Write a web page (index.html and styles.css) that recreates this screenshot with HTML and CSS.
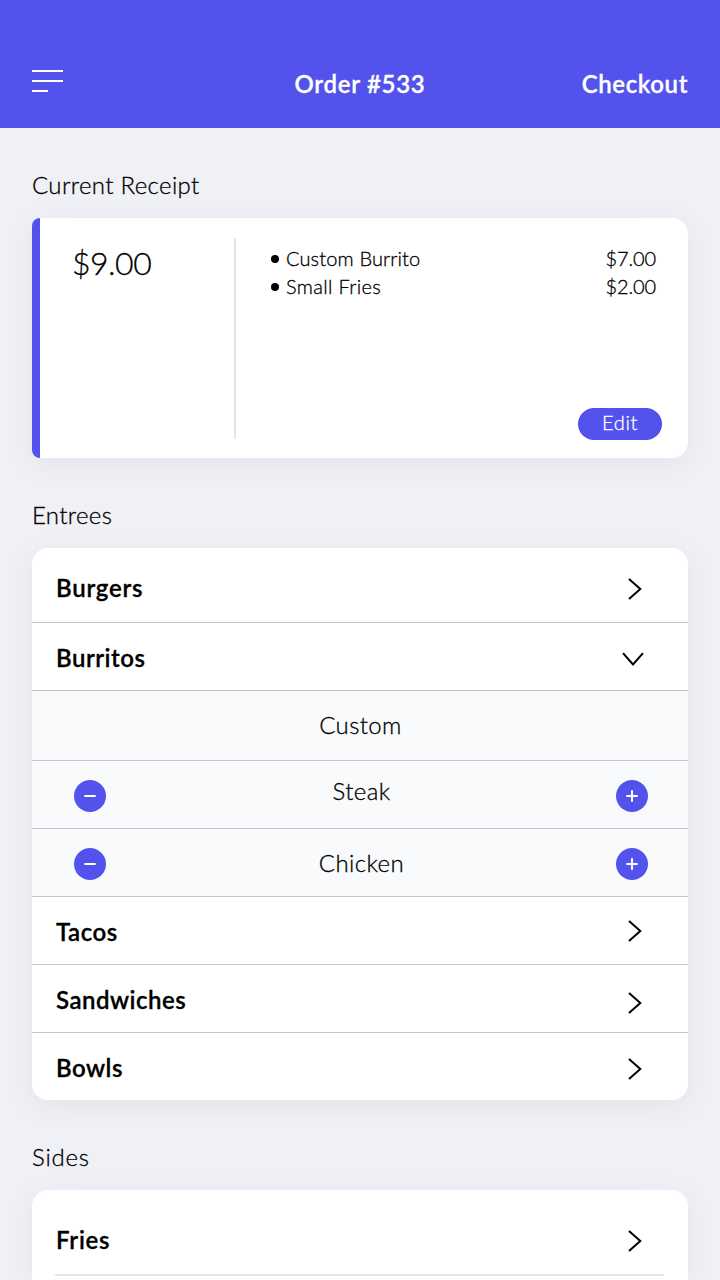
FILE: index.html
```html
<!DOCTYPE html>
<html lang="en">
<head>
<meta charset="utf-8">
<title>Order #533</title>
<link rel="stylesheet" href="styles.css">
</head>
<body>
<svg class="sprite" aria-hidden="true">
  <symbol id="right" viewBox="0 0 24 24"><path d="M6 2l11.300 10L6 22"/></symbol>
  <symbol id="down" viewBox="0 0 24 24"><path d="M2 6.200l10 11.300L22 6.200"/></symbol>
  <symbol id="minus" viewBox="0 0 32 32"><path d="M10.300 16h11.400"/></symbol>
  <symbol id="plus" viewBox="0 0 32 32"><path d="M10.300 16h11.400M16 10.300v11.400"/></symbol>
</svg>
<header class="topbar">
  <svg class="menu" viewBox="0 0 32 24"><path d="M0 3h31M0 13h31M0 23h16"/></svg>
  <h1 class="title">Order #533</h1>
  <a class="checkout">Checkout</a>
</header>
<main class="content">
  <h2 class="heading">Current Receipt</h2>
  <section class="card receipt">
    <div class="total">$9.00</div>
    <div class="details">
      <ul class="items">
        <li class="item"><span class="dot"></span><span class="name">Custom Burrito</span><span class="price">$7.00</span></li>
        <li class="item"><span class="dot"></span><span class="name wide">Small Fries</span><span class="price">$2.00</span></li>
      </ul>
      <button class="edit">Edit</button>
    </div>
  </section>

  <h2 class="heading">Entrees</h2>
  <section class="card menu-list">
    <div class="row first"><span class="label wider">Burgers</span><svg class="chevron"><use href="#right"/></svg></div>
    <div class="row"><span class="label">Burritos</span><svg class="chevron open"><use href="#down"/></svg></div>
    <div class="row option custom"><span class="choice">Custom</span></div>
    <div class="row option steak">
      <svg class="round"><use href="#minus"/></svg><span class="choice">Steak</span><svg class="round"><use href="#plus"/></svg>
    </div>
    <div class="row option chicken">
      <svg class="round"><use href="#minus"/></svg><span class="choice">Chicken</span><svg class="round"><use href="#plus"/></svg>
    </div>
    <div class="row tacos"><span class="label">Tacos</span><svg class="chevron"><use href="#right"/></svg></div>
    <div class="row sandwiches"><span class="label">Sandwiches</span><svg class="chevron"><use href="#right"/></svg></div>
    <div class="row last"><span class="label">Bowls</span><svg class="chevron"><use href="#right"/></svg></div>
  </section>

  <h2 class="heading wider">Sides</h2>
  <section class="card sides">
    <div class="row fries"><span class="label wider">Fries</span><svg class="chevron"><use href="#right"/></svg></div>
    <hr class="divider">
  </section>
</main>
</body>
</html>
```
FILE: styles.css
```css
* { box-sizing: border-box; }
body {
  margin: 0;
  background: #f0f1f6;
  color: #000;
  font-family: Lato, "Open Sans", sans-serif;
  font-size: 24px;
  font-weight: 300;
  line-height: 32px;
  -webkit-text-stroke: 0.3px currentColor;
}
.sprite { display: block; width: 0; height: 0; }
.topbar {
  display: grid;
  grid-template-columns: 1fr auto 1fr;
  height: 128px;
  padding: 67px 32px 0;
  background: #5352ed;
  color: #fff;
}
.menu { width: 32px; height: 24px; margin-top: 1px; fill: none; stroke: #fff; stroke-width: 2; }
.title, .checkout { margin: 0; padding-top: 1px; font-size: 24px; font-weight: 600; letter-spacing: 0.7px; }
.checkout { justify-self: end; letter-spacing: 0.6px; }
.content { padding: 41px 32px 0; }
.heading { margin: 0; height: 49px; font-size: 24px; font-weight: 300; letter-spacing: 0.35px; }
.card {
  margin-bottom: 41px;
  border-radius: 16px;
  background: #fff;
  box-shadow: 0 6px 30px rgba(0, 0, 0, 0.06);
}
.receipt {
  display: flex;
  height: 240px;
  padding: 20px 26px 18px 32px;
  border-left: 8px solid #5352ed;
  border-radius: 8px 16px 16px 8px;
}
.total { width: 162px; padding-top: 5px; font-size: 32px; line-height: 40px; letter-spacing: -0.5px; }
.details {
  flex: 1;
  display: flex;
  flex-direction: column;
  justify-content: space-between;
  border-left: 2px solid #e5e5e5;
  margin-bottom: 1px;
}
.items { margin: 0; padding: 6px 6px 0 35px; list-style: none; font-size: 20px; line-height: 28px; letter-spacing: 0.15px; }
.item { display: flex; align-items: flex-start; }
.dot { width: 8px; height: 8px; margin: 11px 7px 0 0; border-radius: 50%; background: #000; }
.name { flex: 1; }
.wide { letter-spacing: 0.35px; }
.price { letter-spacing: -0.1px; }
.edit {
  align-self: flex-end;
  width: 84px;
  height: 32px;
  margin-bottom: -1px;
  padding: 0 0 3px;
  border: 0;
  border-radius: 16px;
  background: #5352ed;
  color: #fff;
  font: 300 20px/29px Lato, sans-serif;
  letter-spacing: 0.7px;
}
.row {
  display: flex;
  justify-content: space-between;
  height: 68px;
  padding: 18px 41px 0 24px;
  border-bottom: 1px solid #c4c5c9;
}
.first { height: 75px; padding-top: 23px; }
.last { height: 67px; border-bottom: 0; }
.label { padding-top: 1px; font-weight: 600; letter-spacing: 0.5px; }
.wider { letter-spacing: 0.75px; }
.chevron { width: 24px; height: 24px; margin-top: 6px; fill: none; stroke: #000; stroke-width: 2; }
.open { margin-right: 2px; }
.tacos .chevron { margin-top: 4px; }
.sandwiches .chevron { margin-top: 8px; }
.option { padding: 18px 40px 0 42px; background: #f9fafc; letter-spacing: 0.4px; }
.custom { height: 70px; justify-content: center; }
.steak { padding-top: 14px; }
.choice { margin-left: 1px; }
.custom .choice { margin-left: -1px; }
.round { width: 32px; height: 32px; margin-top: 1px; border-radius: 50%; background: #5352ed; fill: none; stroke: #fff; stroke-width: 2; }
.steak .round { margin-top: 5px; }
.sides { height: 90px; margin-bottom: 0; border-radius: 16px 16px 0 0; }
.fries { height: 84px; padding-top: 33px; border-bottom: 0; }
.divider { height: 2px; margin: 0 24px 0 23px; border: 0; background: #e5e5e5; }
```
